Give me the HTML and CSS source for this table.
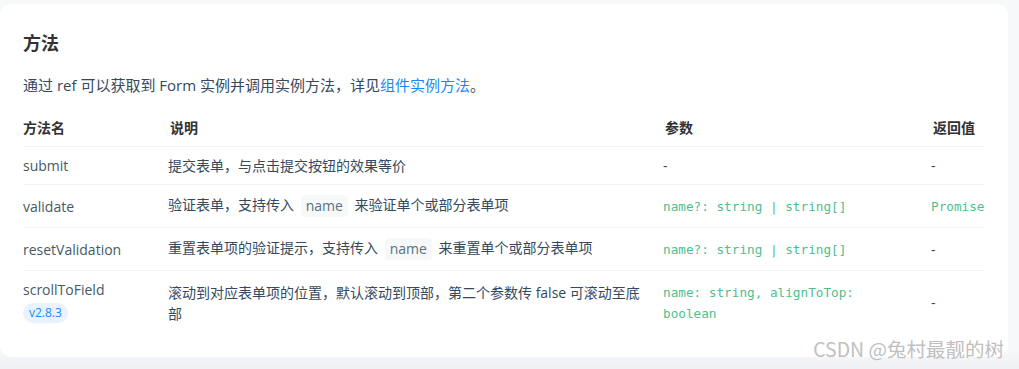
FILE: index.html
```html
<!DOCTYPE html>
<html lang="zh">
<head>
<meta charset="utf-8">
<link rel="stylesheet" href="styles.css">
</head>
<body>
<div class="page">
  <section class="card">
    <h3 class="title">方法</h3>
    <p class="intro">通过 ref 可以获取到 Form 实例并调用实例方法，详见<a class="link" href="#">组件实例方法</a>。</p>
    <table class="table">
      <colgroup>
        <col class="c1"><col class="c2"><col class="c3"><col class="c4">
      </colgroup>
      <thead>
        <tr><th>方法名</th><th>说明</th><th>参数</th><th>返回值</th></tr>
      </thead>
      <tbody>
        <tr>
          <td>submit</td>
          <td>提交表单，与点击提交按钮的效果等价</td>
          <td>-</td>
          <td>-</td>
        </tr>
        <tr>
          <td>validate</td>
          <td>验证表单，支持传入 <code class="icode">name</code> 来验证单个或部分表单项</td>
          <td><em class="type">name?: string | string[]</em></td>
          <td><em class="type">Promise</em></td>
        </tr>
        <tr>
          <td>resetValidation</td>
          <td>重置表单项的验证提示，支持传入 <code class="icode">name</code> 来重置单个或部分表单项</td>
          <td><em class="type">name?: string | string[]</em></td>
          <td>-</td>
        </tr>
        <tr>
          <td><div>scrollToField</div><div><span class="tag">v2.8.3</span></div></td>
          <td>滚动到对应表单项的位置，默认滚动到顶部，第二个参数传 false 可滚动至底部</td>
          <td><em class="type">name: string, alignToTop: boolean</em></td>
          <td>-</td>
        </tr>
      </tbody>
    </table>
  </section>
  <div class="watermark">CSDN @兔村最靓的树</div>
</div>
</body>
</html>
```
FILE: styles.css
```css
html, body {
  margin: 0;
  padding: 0;
  background: #f7f8fa;
}
body {
  font-family: "Open Sans", "Noto Sans CJK SC", sans-serif;
}
.page {
  position: relative;
  width: 1019px;
  height: 369px;
  padding: 4px 11px 0 0;
  box-sizing: border-box;
  background: linear-gradient(#f7f8fa 0, #f7f8fa 350px, #eff0f3 369px);
}
.card {
  background: #fff;
  border-radius: 12px;
  padding: 24px 23px 23px 23px;
  box-sizing: border-box;
  width: 1008px;
}
.title {
  margin: 0;
  font-size: 18px;
  line-height: 30px;
  font-weight: 700;
  color: #323233;
}
.intro {
  margin: 14px 0 0;
  font-size: 15px;
  line-height: 26px;
  color: #34495e;
}
.link {
  color: #1989fa;
  text-decoration: none;
}
.table {
  width: 100%;
  margin-top: 11px;
  border-collapse: collapse;
  table-layout: fixed;
  font-size: 14px;
  line-height: 21px;
  color: #34495e;
}
.c1 { width: 137px; }
.c2 { width: 495px; }
.c3 { width: 268px; }
.c4 { width: 62px; }
.table th {
  padding: 8px 10px;
  text-align: left;
  font-weight: 600;
  color: #323233;
}
.table th:first-child { padding-left: 0; }
.table th:last-child { padding-right: 0; }
.table td {
  padding: 8px;
  border-top: 1px solid #f1f4f8;
  vertical-align: middle;
}
.table td:first-child {
  padding-left: 0;
  color: #455a64;
}
.table td:last-child { padding-right: 0; }
.icode {
  display: inline-block;
  margin: 2px 3px;
  padding: 0 5px;
  font-family: "Open Sans", sans-serif;
  font-size: 14px;
  line-height: 22px;
  color: #58727e;
  background: #f6f8fa;
  border-radius: 4px;
  vertical-align: middle;
}
.type {
  display: inline-block;
  max-width: 240px;
  font-style: normal;
  font-family: "DejaVu Sans Mono", "Liberation Mono", monospace;
  font-size: 12.7px;
  color: #4fc08d;
}
.tag {
  display: inline-block;
  margin: 3px 0;
  padding: 0 6px;
  font-size: 12px;
  line-height: 20px;
  font-weight: 500;
  color: #1989fa;
  background: #e8f3ff;
  border-radius: 20px;
}
.watermark {
  position: absolute;
  right: 15px;
  bottom: 8px;
  font-family: "Noto Sans CJK SC", sans-serif;
  font-size: 19.5px;
  line-height: 24px;
  color: #c0c0c0;
  text-shadow: 0 0 1px #fff;
}
```
